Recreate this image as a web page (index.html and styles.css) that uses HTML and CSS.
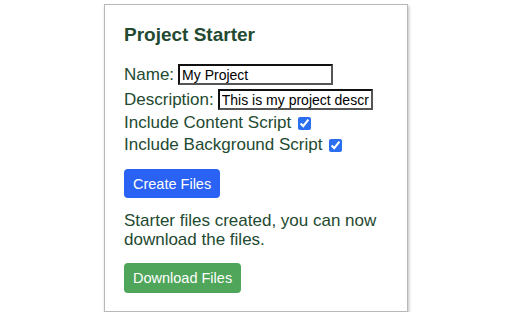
FILE: index.html
```html
<!DOCTYPE html>
<html>
<head>
<meta charset="utf-8">
<link rel="stylesheet" href="styles.css">
</head>
<body>
<div class="card">
  <h1 class="title">Project Starter</h1>
  <div class="row field"><label>Name:</label><input class="text" type="text" value="My Project"></div>
  <div class="row field"><label>Description:</label><input class="text" type="text" value="This is my project description"></div>
  <div class="row check"><label>Include Content Script</label><input class="box" type="checkbox" checked></div>
  <div class="row check"><label>Include Background Script</label><input class="box" type="checkbox" checked></div>
  <div class="actions"><button class="btn btn-blue">Create Files</button></div>
  <p class="msg">Starter files created, you can now download the files.</p>
  <div class="actions"><button class="btn btn-green">Download Files</button></div>
</div>
</body>
</html>
```
FILE: styles.css
```css
html, body {
  margin: 0;
  padding: 0;
  background: #ffffff;
}
body {
  font-family: "Liberation Sans", Arial, sans-serif;
  color: #234a31;
  padding-top: 4px;
}
.card {
  width: 304px;
  box-sizing: border-box;
  margin: 0 auto;
  border: 1px solid #b8b8b8;
  box-shadow: 1px 2px 3px rgba(0,0,0,0.25);
  background: #fff;
  padding: 19px 19px 18px 19px;
}
.title {
  margin: 0 0 16px 0;
  font-size: 19px;
  line-height: 22px;
  font-weight: bold;
  color: #234a31;
}
.row {
  display: flex;
  align-items: center;
  font-size: 17px;
  line-height: 22px;
}
.field {
  height: 25px;
}
.text {
  margin: 0 0 0 4px;
  width: 155px;
  height: 21px;
  box-sizing: border-box;
  padding: 0 2px;
  font-family: "Liberation Sans", Arial, sans-serif;
  font-size: 14px;
  color: #000;
  border: 2px solid #111;
  border-right-color: #555;
  border-bottom-color: #555;
  background: #fff;
  outline: none;
}
.check {
  height: 22px;
}
.box {
  margin: 0 0 0 7px;
  width: 13px;
  height: 13px;
  accent-color: #2b6ef0;
}
.actions {
  display: flex;
}
.btn {
  font-family: "Liberation Sans", Arial, sans-serif;
  font-size: 14.5px;
  color: #fff;
  border: none;
  border-radius: 4px;
  padding: 0 9px;
  height: 29px;
}
.btn-blue {
  background: #2a62f4;
  margin-top: 13px;
}
.btn-green {
  background: #4fa55a;
  height: 30px;
}
.msg {
  margin: 13px 0 14px 0;
  font-size: 17px;
  line-height: 19px;
}
```
